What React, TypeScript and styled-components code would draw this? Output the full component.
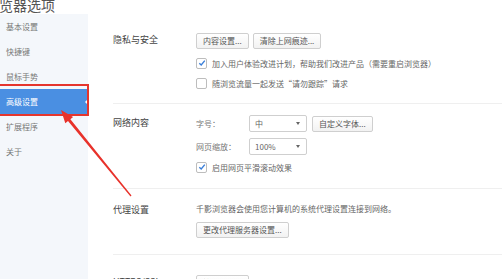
import React from "react";
import styled, { createGlobalStyle } from "styled-components";

const GlobalStyle = createGlobalStyle`
  html, body {
    margin: 0;
    padding: 0;
    overflow: hidden;
    background: #ffffff;
  }
  body {
    font-family: "Noto Sans CJK SC", "Noto Sans", sans-serif;
  }
`;

const Page = styled.div`
  position: relative;
  display: flex;
  flex-direction: column;
  width: 502px;
  height: 279px;
  overflow: hidden;
`;

const TitleBar = styled.div`
  height: 14px;
  flex-shrink: 0;
  background: #ffffff;
  overflow: hidden;
`;

const Title = styled.div`
  margin: -3px 0 0 -15px;
  font-size: 14px;
  line-height: 16px;
  color: #555;
  white-space: nowrap;
`;

const Body = styled.div`
  display: flex;
  flex: 1;
  min-height: 0;
`;

const Sidebar = styled.nav`
  width: 88px;
  flex-shrink: 0;
  background: #f4f7fb;
  display: flex;
  flex-direction: column;
`;

const NavItem = styled.div<{ $active?: boolean }>`
  position: relative;
  height: 25px;
  display: flex;
  align-items: center;
  padding-left: 6px;
  font-size: 8px;
  color: ${({ $active }) => ($active ? "#ffffff" : "#777")};
  background: ${({ $active }) => ($active ? "#4a8fe2" : "transparent")};

  ${({ $active }) =>
    $active &&
    `
    &::before {
      content: "";
      position: absolute;
      right: 0;
      top: 50%;
      margin-top: -3px;
      border-style: solid;
      border-width: 3px 3px 3px 0;
      border-color: transparent #ffffff transparent transparent;
    }
    &::after {
      content: "";
      position: absolute;
      top: -5px;
      bottom: -2px;
      left: -2px;
      right: -1px;
      border: 2px solid #e5352d;
    }
  `}
`;

const Main = styled.main`
  flex: 1;
  padding-left: 25px;
  overflow: hidden;
`;

const Section = styled.section<{ $top: number; $bottom: number; $last?: boolean }>`
  display: grid;
  grid-template-columns: 83px 1fr;
  padding: ${({ $top, $bottom }) => `${$top}px 0 ${$bottom}px`};
  border-bottom: ${({ $last }) => ($last ? "none" : "1px solid #efefef")};
`;

const SectionLabel = styled.div`
  font-size: 9px;
  color: #444;
  line-height: 16px;
  margin-top: -1px;
`;

const Content = styled.div<{ $gap: number }>`
  display: flex;
  flex-direction: column;
  gap: ${({ $gap }) => $gap}px;
`;

const Row = styled.div`
  display: flex;
  align-items: center;
  gap: 4px;
`;

const Button = styled.button`
  height: 16px;
  padding: 0 6px;
  border: 1px solid #cfcfcf;
  border-radius: 2px;
  background: linear-gradient(#ffffff, #f2f2f2);
  font-family: inherit;
  font-size: 8px;
  color: #555;
  line-height: 14px;
  white-space: nowrap;
`;

const CheckRow = styled.label`
  display: flex;
  align-items: center;
  gap: 5px;
  height: 12px;
  font-size: 8px;
  color: #666;
  white-space: nowrap;
`;

const Box = styled.span<{ $checked?: boolean }>`
  width: 9px;
  height: 9px;
  border: 1px solid #bdbdbd;
  border-radius: 2px;
  background: #fff;
  display: flex;
  align-items: center;
  justify-content: center;
  flex-shrink: 0;
`;

const FieldLabel = styled.span`
  width: 49px;
  font-size: 8px;
  color: #777;
`;

const Select = styled.div`
  width: 58px;
  height: 17px;
  box-sizing: border-box;
  border: 1px solid #cfcfcf;
  border-radius: 2px;
  display: flex;
  align-items: center;
  justify-content: space-between;
  padding: 0 6px 0 5px;
  font-size: 8px;
  color: #666;
`;

const Caret = styled.span`
  width: 0;
  height: 0;
  border-style: solid;
  border-width: 3px 2px 0 2px;
  border-color: #666 transparent transparent transparent;
`;

const Note = styled.div`
  font-size: 8px;
  color: #666;
  line-height: 12px;
  white-space: nowrap;
`;

const Arrow = styled.svg`
  position: absolute;
  left: 0;
  top: 0;
  pointer-events: none;
`;

const Checkbox: React.FC<{ checked?: boolean; label: string }> = ({ checked, label }) => (
  <CheckRow>
    <Box $checked={checked}>
      {checked && (
        <svg width="8" height="8" viewBox="0 0 8 8">
          <path d="M1.3 4.2 L3.2 6 L6.8 1.6" fill="none" stroke="#3b7fd9" strokeWidth="1.4" />
        </svg>
      )}
    </Box>
    {label}
  </CheckRow>
);

const navItems = ["基本设置", "快捷键", "鼠标手势", "高级设置", "扩展程序", "关于"];

export default function App() {
  return (
    <>
      <GlobalStyle />
      <Page>
        <TitleBar>
          <Title>浏览器选项</Title>
        </TitleBar>
        <Body>
          <Sidebar>
            {navItems.map((item) => (
              <NavItem key={item} $active={item === "高级设置"}>
                {item}
              </NavItem>
            ))}
          </Sidebar>
          <Main>
            <Section $top={19} $bottom={14}>
              <SectionLabel>隐私与安全</SectionLabel>
              <Content $gap={8}>
                <Row>
                  <Button>内容设置...</Button>
                  <Button>清除上网痕迹...</Button>
                </Row>
                <Checkbox checked label="加入用户体验改进计划，帮助我们改进产品（需要重启浏览器）" />
                <Checkbox label="随浏览流量一起发送“请勿跟踪”请求" />
              </Content>
            </Section>
            <Section $top={11} $bottom={15}>
              <SectionLabel style={{ marginTop: 0 }}>网络内容</SectionLabel>
              <Content $gap={6}>
                <Row>
                  <FieldLabel>字号：</FieldLabel>
                  <Select>
                    中<Caret />
                  </Select>
                  <Button style={{ marginLeft: 1 }}>自定义字体...</Button>
                </Row>
                <Row>
                  <FieldLabel>网页缩放：</FieldLabel>
                  <Select>
                    100%<Caret />
                  </Select>
                </Row>
                <Checkbox checked label="启用网页平滑滚动效果" />
              </Content>
            </Section>
            <Section $top={14} $bottom={16}>
              <SectionLabel>代理设置</SectionLabel>
              <Content $gap={7}>
                <Note>千影浏览器会使用您计算机的系统代理设置连接到网络。</Note>
                <Row>
                  <Button>更改代理服务器设置...</Button>
                </Row>
              </Content>
            </Section>
            <Section $top={20} $bottom={0} $last>
              <SectionLabel>HTTPS/SSL</SectionLabel>
              <Content $gap={6}>
                <Row>
                  <Button>管理证书...</Button>
                </Row>
              </Content>
            </Section>
          </Main>
        </Body>
        <Arrow width="502" height="279" viewBox="0 0 502 279">
          <polygon
            points="61,110 73.1,117 70.4,119.2 131.5,195.6 130.5,196.4 68,121 65.3,123.2"
            fill="#e8322b"
          />
        </Arrow>
      </Page>
    </>
  );
}
